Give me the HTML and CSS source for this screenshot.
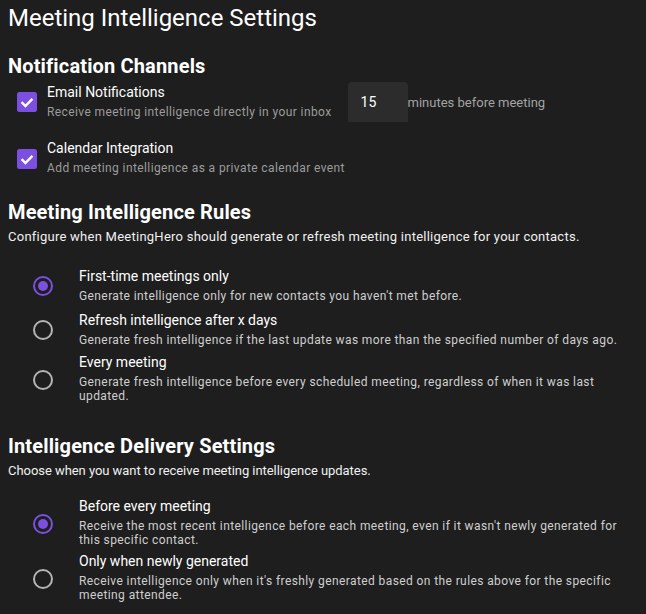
FILE: index.html
```html
<!DOCTYPE html>
<html lang="en">
<head>
<meta charset="utf-8">
<title>Meeting Intelligence Settings</title>
<link rel="stylesheet" href="styles.css">
</head>
<body>
<main class="page">
  <h1 class="page-title">Meeting Intelligence Settings</h1>

  <section class="section">
    <h2 class="section-title">Notification Channels</h2>
    <div class="check-list">
      <div class="check-row">
        <span class="checkbox">
          <svg viewBox="0 0 20 20" width="20" height="20"><rect x="0" y="0" width="20" height="20" rx="2.5" fill="#7b50e0"/><polyline points="4.6,10.2 8.4,14 15.4,6.8" fill="none" stroke="#fff" stroke-width="2.4"/></svg>
        </span>
        <div class="opt-text">
          <div class="opt-label">Email Notifications</div>
          <div class="opt-desc muted">Receive meeting intelligence directly in your inbox</div>
        </div>
        <input class="minutes-input" type="text" value="15">
        <span class="minutes-label">minutes before meeting</span>
      </div>
      <div class="check-row">
        <span class="checkbox">
          <svg viewBox="0 0 20 20" width="20" height="20"><rect x="0" y="0" width="20" height="20" rx="2.5" fill="#7b50e0"/><polyline points="4.6,10.2 8.4,14 15.4,6.8" fill="none" stroke="#fff" stroke-width="2.4"/></svg>
        </span>
        <div class="opt-text">
          <div class="opt-label">Calendar Integration</div>
          <div class="opt-desc muted">Add meeting intelligence as a private calendar event</div>
        </div>
      </div>
    </div>
  </section>

  <section class="section section-rules">
    <h2 class="section-title">Meeting Intelligence Rules</h2>
    <p class="section-intro intro-wide">Configure when MeetingHero should generate or refresh meeting intelligence for your contacts.</p>
    <div class="radio-list">
      <div class="radio-row">
        <span class="radio checked"><svg viewBox="0 0 20 20" width="20" height="20"><circle cx="10" cy="10" r="9" fill="none" stroke="#7b50e0" stroke-width="2"/><circle cx="10" cy="10" r="5" fill="#7b50e0"/></svg></span>
        <div class="opt-text">
          <div class="opt-label">First-time meetings only</div>
          <div class="opt-desc">Generate intelligence only for new contacts you haven't met before.</div>
        </div>
      </div>
      <div class="radio-row">
        <span class="radio"><svg viewBox="0 0 20 20" width="20" height="20"><circle cx="10" cy="10" r="9" fill="none" stroke="#b4b4b4" stroke-width="2"/></svg></span>
        <div class="opt-text">
          <div class="opt-label">Refresh intelligence after x days</div>
          <div class="opt-desc">Generate fresh intelligence if the last update was more than the specified number of days ago.</div>
        </div>
      </div>
      <div class="radio-row">
        <span class="radio"><svg viewBox="0 0 20 20" width="20" height="20"><circle cx="10" cy="10" r="9" fill="none" stroke="#b4b4b4" stroke-width="2"/></svg></span>
        <div class="opt-text">
          <div class="opt-label">Every meeting</div>
          <div class="opt-desc">Generate fresh intelligence before every scheduled meeting, regardless of when it was last updated.</div>
        </div>
      </div>
    </div>
  </section>

  <section class="section section-delivery">
    <h2 class="section-title">Intelligence Delivery Settings</h2>
    <p class="section-intro intro-narrow">Choose when you want to receive meeting intelligence updates.</p>
    <div class="radio-list delivery-list">
      <div class="radio-row">
        <span class="radio checked"><svg viewBox="0 0 20 20" width="20" height="20"><circle cx="10" cy="10" r="9" fill="none" stroke="#7b50e0" stroke-width="2"/><circle cx="10" cy="10" r="5" fill="#7b50e0"/></svg></span>
        <div class="opt-text">
          <div class="opt-label">Before every meeting</div>
          <div class="opt-desc">Receive the most recent intelligence before each meeting, even if it wasn't newly generated for this specific contact.</div>
        </div>
      </div>
      <div class="radio-row">
        <span class="radio"><svg viewBox="0 0 20 20" width="20" height="20"><circle cx="10" cy="10" r="9" fill="none" stroke="#b4b4b4" stroke-width="2"/></svg></span>
        <div class="opt-text">
          <div class="opt-label">Only when newly generated</div>
          <div class="opt-desc">Receive intelligence only when it's freshly generated based on the rules above for the specific meeting attendee.</div>
        </div>
      </div>
    </div>
  </section>
</main>
</body>
</html>
```

FILE: styles.css
```css
html, body {
  margin: 0;
  padding: 0;
  background: #1e1e1e;
}

body {
  font-family: Roboto, "Liberation Sans", sans-serif;
  color: #f2f2f2;
}

.page {
  padding: 0 8px;
  width: 630px;
  box-sizing: content-box;
}

.page-title {
  margin: 0;
  font-size: 24px;
  font-weight: 400;
  line-height: 37px;
  color: #ffffff;
}

.section-title {
  margin: 17px 0 0;
  font-size: 20px;
  font-weight: 700;
  line-height: 24px;
  letter-spacing: 0.15px;
  color: #ffffff;
}

.section-rules .section-title {
  margin-top: 22px;
}

.section-delivery .section-title {
  margin-top: 28px;
}

.section-intro {
  margin: 5px 0 0;
  font-size: 13px;
  line-height: 16px;
  color: #f0f0f0;
}

.intro-wide {
  letter-spacing: 0.25px;
}

.intro-narrow {
  letter-spacing: -0.05px;
}

/* checkboxes */
.check-list {
  margin-top: 4px;
  display: flex;
  flex-direction: column;
  gap: 17px;
}

.check-row {
  display: flex;
  align-items: center;
}

.checkbox {
  display: flex;
  margin-left: 9px;
  margin-right: 10px;
  flex: none;
}

.minutes-input {
  margin-left: 16px;
  width: 60px;
  height: 40px;
  box-sizing: border-box;
  border: none;
  border-radius: 4px 4px 0 0;
  background: #2c2c2c;
  color: #ffffff;
  font-family: Roboto, "Liberation Sans", sans-serif;
  font-size: 14px;
  padding: 0 0 0 13px;
  outline: none;
}

.minutes-label {
  font-size: 13px;
  color: #a3a3a3;
}

/* option text */
.opt-text {
  padding-bottom: 3px;
}

.opt-label {
  font-size: 14px;
  line-height: 18px;
  color: #ffffff;
}

.opt-desc {
  margin-top: 4px;
  font-size: 12px;
  line-height: 14px;
  letter-spacing: 0.4px;
  color: #cfcfcf;
}

.opt-desc.muted {
  color: #9c9c9c;
}

/* radios */
.radio-list {
  margin-top: 20px;
  display: flex;
  flex-direction: column;
  gap: 2px;
}

.delivery-list {
  margin-top: 18px;
}

.radio-row {
  display: flex;
  align-items: center;
  min-height: 42px;
}

.radio {
  flex: none;
  width: 42px;
  height: 42px;
  margin-left: 14px;
  margin-right: 15px;
  display: flex;
  align-items: center;
  justify-content: center;
}
```
